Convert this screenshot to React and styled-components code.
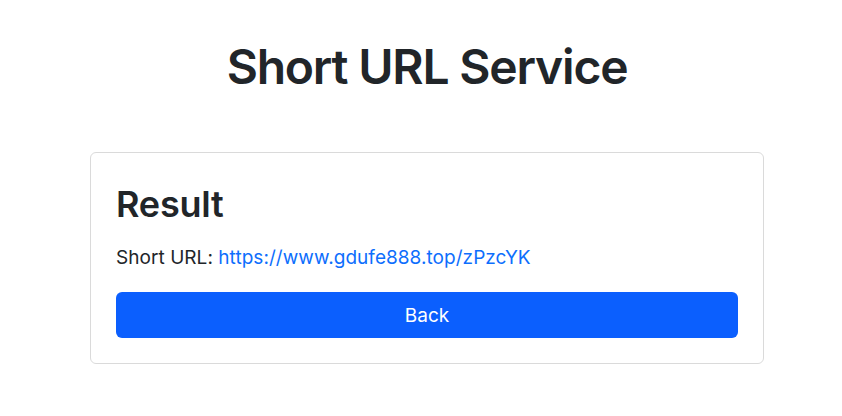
import styled, { createGlobalStyle } from 'styled-components';

const GlobalStyle = createGlobalStyle`
  body {
    margin: 0;
    background: #fff;
    color: #212529;
    font-family: Inter, "Liberation Sans", Arial, sans-serif;
  }
`;

const Page = styled.main`
  width: 842px;
  padding-left: 12px;
  box-sizing: border-box;
  display: flex;
  flex-direction: column;
  align-items: center;
`;

const Title = styled.h1`
  margin: 38px 0 56px;
  font-size: 48px;
  font-weight: 600;
  line-height: 1.2;
  letter-spacing: -1.2px;
`;

const Card = styled.section`
  width: 674px;
  box-sizing: border-box;
  border: 1px solid #dadada;
  border-radius: 6px;
  padding: 30px 25px 25px;
  display: flex;
  flex-direction: column;
`;

const CardTitle = styled.h2`
  margin: 0 0 18px;
  font-size: 36px;
  font-weight: 600;
  line-height: 1.2;
  letter-spacing: -0.2px;
`;

const Line = styled.p`
  margin: 0 0 20px;
  font-size: 19px;
  line-height: 1.5;
  letter-spacing: 0.05px;
`;

const Link = styled.a`
  color: #0d6efd;
  text-decoration: none;
`;

const Button = styled.button`
  height: 46px;
  border: none;
  border-radius: 6px;
  background: #0b5ffe;
  color: #fff;
  font-family: inherit;
  font-size: 19px;
  cursor: pointer;
`;

export default function App() {
  return (
    <>
      <GlobalStyle />
      <Page>
        <Title>Short URL Service</Title>
        <Card>
          <CardTitle>Result</CardTitle>
          <Line>
            Short URL:{' '}
            <Link href="#">https://www.gdufe888.top/zPzcYK</Link>
          </Line>
          <Button>Back</Button>
        </Card>
      </Page>
    </>
  );
}
